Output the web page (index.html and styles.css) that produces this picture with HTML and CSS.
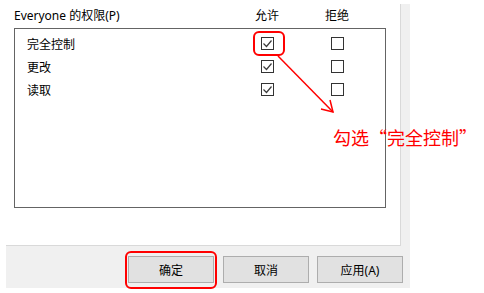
FILE: index.html
```html
<!DOCTYPE html>
<html lang="zh-CN">
<head>
  <meta charset="UTF-8">
  <title>Everyone 的权限</title>
  <link rel="stylesheet" href="styles.css">
</head>
<body>
  <div class="dialog">
    <div class="panel">
      <div class="perm-head">
        <span>Everyone 的权限(P)</span>
        <span class="col">允许</span>
        <span class="col">拒绝</span>
      </div>
      <div class="perm-list">
        <div class="perm-row">
          <span>完全控制</span>
          <span class="col"><span class="chk on"><svg width="11" height="11" viewBox="0 0 11 11"><polyline points="1.5,5.5 4.5,8.5 9.5,2.5" fill="none" stroke="#3c3c3c" stroke-width="1.2"/></svg></span></span>
          <span class="col"><span class="chk"></span></span>
        </div>
        <div class="perm-row">
          <span>更改</span>
          <span class="col"><span class="chk on"><svg width="11" height="11" viewBox="0 0 11 11"><polyline points="1.5,5.5 4.5,8.5 9.5,2.5" fill="none" stroke="#3c3c3c" stroke-width="1.2"/></svg></span></span>
          <span class="col"><span class="chk"></span></span>
        </div>
        <div class="perm-row">
          <span>读取</span>
          <span class="col"><span class="chk on"><svg width="11" height="11" viewBox="0 0 11 11"><polyline points="1.5,5.5 4.5,8.5 9.5,2.5" fill="none" stroke="#3c3c3c" stroke-width="1.2"/></svg></span></span>
          <span class="col"><span class="chk"></span></span>
        </div>
      </div>
    </div>
    <div class="btn-bar">
      <button class="btn">确定</button>
      <button class="btn">取消</button>
      <button class="btn btn-last">应用(A)</button>
    </div>
  </div>

  <!-- annotation layer -->
  <div class="mark mark-check"></div>
  <div class="mark mark-ok"></div>
  <svg class="arrow" width="484" height="293" viewBox="0 0 484 293">
    <line x1="278" y1="56" x2="333" y2="112" stroke="#ff0000" stroke-width="1.5"/>
    <polyline points="330,100 333,112 321,109" fill="none" stroke="#ff0000" stroke-width="1.5"/>
  </svg>
  <div class="note">勾选“完全控制”</div>
</body>
</html>
```

FILE: styles.css
```css
* {
  margin: 0;
  padding: 0;
  box-sizing: border-box;
}
body {
  width: 484px;
  height: 293px;
  background: #fff;
  font-family: "Noto Sans", "Noto Sans CJK SC", sans-serif;
  font-size: 12px;
  color: #000;
  position: relative;
  overflow: hidden;
}
.dialog {
  margin: 4px 0 0 6px;
  width: 404px;
  height: 284px;
  background: #f0f0f0;
  display: flex;
  flex-direction: column;
}
.panel {
  width: 395px;
  height: 242px;
  background: #fff;
  border-right: 1px solid #d9d9d9;
  border-bottom: 1px solid #d9d9d9;
  padding: 4px 0 0 8px;
}
.perm-head {
  width: 372px;
  height: 16px;
  line-height: 16px;
  padding-right: 14px;
  display: grid;
  grid-template-columns: 1fr 70px 70px;
  margin-bottom: 4px;
  white-space: nowrap;
}
.col {
  display: flex;
  justify-content: center;
  align-items: center;
}
.perm-list {
  width: 372px;
  height: 180px;
  border: 1px solid #646464;
  padding: 3px 13px 0 12px;
}
.perm-row {
  height: 23px;
  display: grid;
  grid-template-columns: 1fr 70px 70px;
  align-items: center;
}
.chk {
  width: 13px;
  height: 13px;
  border: 1px solid #333;
  background: #fff;
  display: block;
}
.chk svg {
  display: block;
}
.btn-bar {
  flex: 1;
  display: flex;
  justify-content: flex-end;
  padding: 10px 7px 0 0;
}
.btn {
  width: 86px;
  height: 27px;
  background: #e1e1e1;
  border: 1px solid #adadad;
  font-family: "Noto Sans", "Noto Sans CJK SC", sans-serif;
  font-size: 12px;
  color: #000;
  margin-right: 9px;
}
.btn-last {
  margin-right: 0;
}
.btn:nth-child(2) {
  margin-right: 8px;
}
.mark {
  position: absolute;
  border: 2px solid #ff0000;
  border-radius: 6px;
}
.mark-check {
  left: 253px;
  top: 31px;
  width: 32px;
  height: 25px;
}
.mark-ok {
  left: 125px;
  top: 251px;
  width: 92px;
  height: 38px;
}
.arrow {
  position: absolute;
  left: 0;
  top: 0;
}
.note {
  position: absolute;
  left: 333px;
  top: 125px;
  font-family: "Noto Sans CJK SC", sans-serif;
  font-size: 18px;
  line-height: 24px;
  color: #ff0000;
  white-space: nowrap;
}
```
